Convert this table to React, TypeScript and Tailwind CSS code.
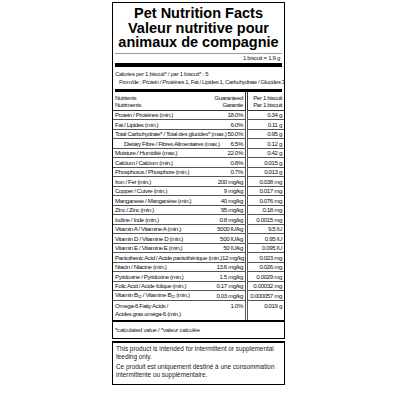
const cond = "font-['Liberation_Sans',Arial,sans-serif] tracking-[-0.3px]";

type Row = { name: React.ReactNode; g: string; per: string; indent?: boolean };

const rows: Row[] = [
  { name: 'Protein / Protéines (min.)', g: '18.0%', per: '0.34 g' },
  { name: 'Fat / Lipides (min.)', g: '6.0%', per: '0.11 g' },
  { name: 'Total Carbohydrate* / Total des glucides* (max.)', g: '50.0%', per: '0.95 g' },
  { name: 'Dietary Fibre / Fibres Alimentaires (max.)', g: '6.5%', per: '0.12 g', indent: true },
  { name: 'Moisture / Humidité (max.)', g: '22.0%', per: '0.42 g' },
  { name: 'Calcium / Calcium (min.)', g: '0.8%', per: '0.015 g' },
  { name: 'Phosphorus / Phosphore (min.)', g: '0.7%', per: '0.013 g' },
  { name: 'Iron / Fer (min.)', g: '200 mg/kg', per: '0.038 mg' },
  { name: 'Copper / Cuivre (min.)', g: '9 mg/kg', per: '0.017 mg' },
  { name: 'Manganese / Manganèse (min.)', g: '40 mg/kg', per: '0.076 mg' },
  { name: 'Zinc / Zinc (min.)', g: '95 mg/kg', per: '0.18 mg' },
  { name: 'Iodine / Iode (min.)', g: '0.8 mg/kg', per: '0.0015 mg' },
  { name: 'Vitamin A / Vitamine A (min.)', g: '5000 IU/kg', per: '9.5 IU' },
  { name: 'Vitamin D / Vitamine D (min.)', g: '500 IU/kg', per: '0.95 IU' },
  { name: 'Vitamin E / Vitamine E (min.)', g: '50 IU/kg', per: '0.095 IU' },
  { name: 'Pantothenic Acid / Acide pantothénique (min.)', g: '12 mg/kg', per: '0.023 mg' },
  { name: 'Niacin / Niacine (min.)', g: '13.6 mg/kg', per: '0.026 mg' },
  { name: 'Pyridoxine / Pyridoxine (min.)', g: '1.5 mg/kg', per: '0.0029 mg' },
  { name: 'Folic Acid / Acide folique (min.)', g: '0.17 mg/kg', per: '0.00032 mg' },
  {
    name: (
      <>
        Vitamin B<span className="relative top-[1px] text-[4px]">12</span> / Vitamine B
        <span className="relative top-[1px] text-[4px]">12</span> (min.)
      </>
    ),
    g: '0.03 mg/kg',
    per: '0.000057 mg',
  },
];

export default function App() {
  return (
    <div className="min-h-screen bg-white pt-[2px] text-[#1a1a1a]">
      <div className="ml-[112px] w-[173px]">
        {/* main panel */}
        <div className="border border-black border-b-2">
          <div className="pt-[3px] text-center font-['Liberation_Sans',Arial,sans-serif] text-[14.5px] font-bold leading-[14.5px] text-black">
            <div>Pet Nutrition Facts</div>
            <div>Valeur nutritive pour</div>
            <div>animaux de compagnie</div>
          </div>
          <div className="mx-[2px] mt-[3px] border-t border-[#999]" />
          <div className={`${cond} pr-[4px] text-right text-[6px] leading-[9px]`}>1 biscuit = 1.9 g</div>
          <div className="mx-[2px] h-[4px] bg-black" />

          <div className={`${cond} px-[2px] pt-[3px] text-[6px] leading-[8px]`}>
            <div>Calories per 1 biscuit* / par 1 biscuit* : 5</div>
            <div className="pl-[4px] whitespace-nowrap tracking-[-0.4px]">
              From/de : Protein / Protéines 1, Fat / Lipides 1, Carbohydrate / Glucides 3
            </div>
          </div>
          <div className="mx-[2px] mt-[3px] h-[3px] bg-black" />

          <div className={`${cond} text-[6.2px] leading-[7px] tracking-[-0.4px] text-[#111]`}>
            {/* header */}
            <div className="flex">
              <div className="flex w-[133px] justify-between border-r border-b border-[#333] px-[2px] py-[2px]">
                <div>
                  <div>Nutrients</div>
                  <div>Nutriments</div>
                </div>
                <div className="text-right">
                  <div>Guaranteed</div>
                  <div>Garantie</div>
                </div>
              </div>
              <div className="ml-[1px] flex-1 border-l border-b border-[#333] py-[2px] pr-[2px] text-right whitespace-nowrap">
                <div>Per 1 biscuit</div>
                <div>Par 1 biscuit</div>
              </div>
            </div>

            {rows.map((r, i) => (
              <div key={i} className="flex h-[9.5px]">
                <div className="flex w-[133px] items-center justify-between border-r border-b border-[#555] px-[2px] whitespace-nowrap">
                  <span className={r.indent ? 'pl-[9px]' : ''}>{r.name}</span>
                  <span>{r.g}</span>
                </div>
                <div className="ml-[1px] flex flex-1 items-center justify-end border-l border-b border-[#555] pr-[2px] whitespace-nowrap">
                  {r.per}
                </div>
              </div>
            ))}

            <div className="flex h-[19px]">
              <div className="flex w-[133px] justify-between border-r border-[#555] px-[2px] pt-[1px] leading-[8px]">
                <div>
                  <div>Omega-6 Fatty Acids /</div>
                  <div>Acides gras oméga-6 (min.)</div>
                </div>
                <span>1.0%</span>
              </div>
              <div className="ml-[1px] flex-1 border-l border-[#555] pt-[1px] pr-[2px] text-right leading-[8px]">
                0.019 g
              </div>
            </div>
          </div>
        </div>

        {/* calculated note */}
        <div className={`${cond} border-x border-b border-black px-[2px] text-[6.2px] leading-[16px]`}>
          *calculated value / *valeur calculée
        </div>

        {/* disclaimer */}
        <div className="mt-[2px] border border-t-2 border-black px-[3px] pt-[2px] pb-[5px] font-['Liberation_Sans',Arial,sans-serif] text-[6.4px] leading-[8px]">
          <p>This product is intended for intermittent or supplemental feeding only.</p>
          <p className="mt-[2px]">Ce produit est uniquement destiné à une consommation intermittente ou supplémentaire.</p>
        </div>
      </div>
    </div>
  );
}
